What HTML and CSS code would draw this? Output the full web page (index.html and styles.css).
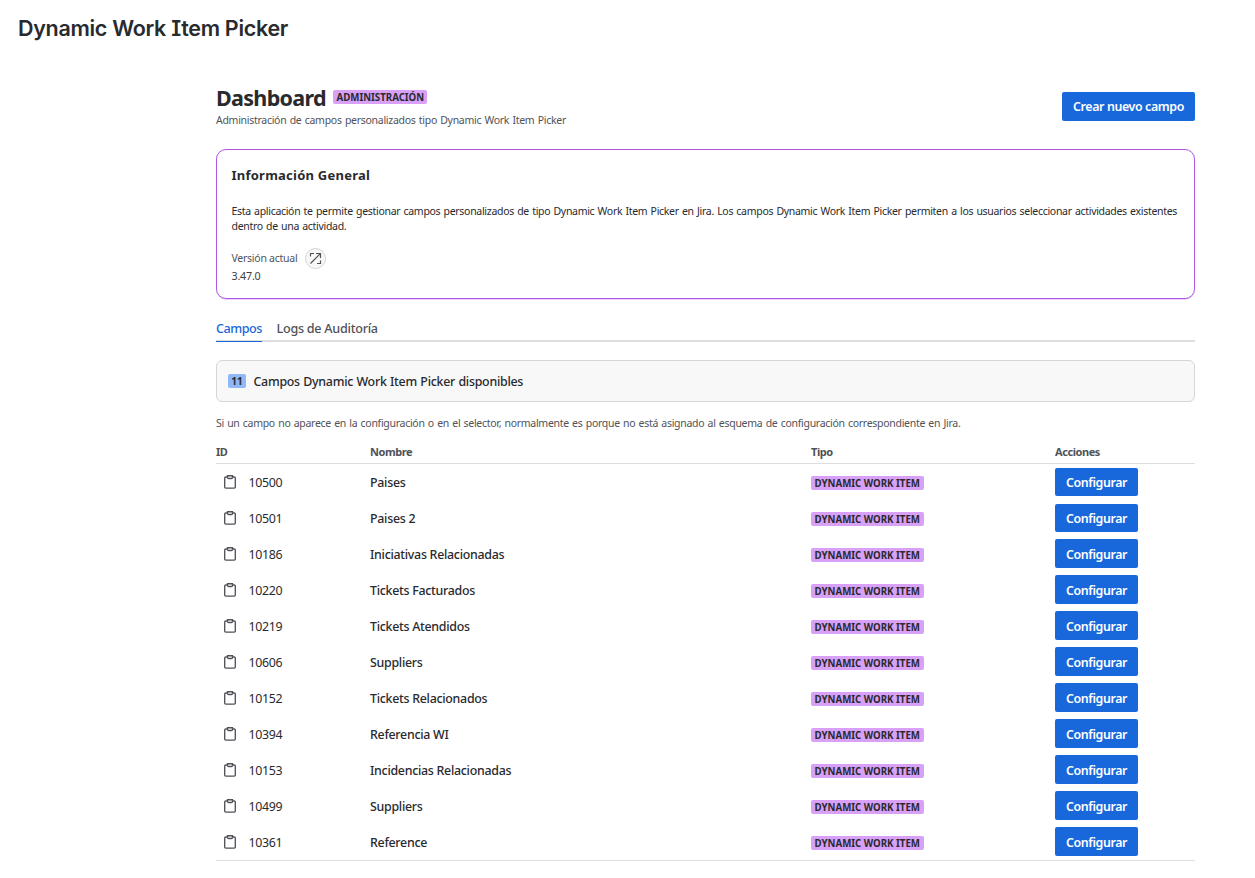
FILE: index.html
```html
<!DOCTYPE html>
<html lang="es">
<head>
<meta charset="utf-8">
<title>Dynamic Work Item Picker</title>
<link rel="stylesheet" href="styles.css">
</head>
<body>
<svg class="sprite" aria-hidden="true"><symbol id="clipboard" viewBox="0 0 14 16"><path d="M4.5 3H2.8Q1.7 3 1.7 4.1V13Q1.7 14.1 2.8 14.1H11.2Q12.3 14.1 12.3 13V4.1Q12.3 3 11.2 3H9.5M4.5 1.7H9.5V3.2Q9.5 4.5 8.4 4.5H5.6Q4.5 4.5 4.5 3.2Z" fill="none" stroke="#505258" stroke-width="1.35"/></symbol></svg>
<h1 class="page-title">Dynamic Work Item Picker</h1>
<main class="content">
  <header class="head">
    <div class="head-text">
      <div class="head-line"><h2 class="dash">Dashboard</h2><span class="lozenge admin">ADMINISTRACIÓN</span></div>
      <p class="subtitle">Administración de campos personalizados tipo Dynamic Work Item Picker</p>
    </div>
    <button class="btn create">Crear nuevo campo</button>
  </header>
  <section class="info">
    <h3 class="info-title">Información General</h3>
    <p class="info-text">Esta aplicación te permite gestionar campos personalizados de tipo Dynamic Work Item Picker en Jira. Los campos Dynamic Work Item Picker permiten a los usuarios seleccionar actividades existentes<br>dentro de una actividad.</p>
    <div class="version"><span class="version-label">Versión actual</span><span class="round"><svg width="13" height="13" viewBox="0 0 13 13"><path d="M1.5 4.5V1.5H5M7 1.5H11.5V6M11.5 8.5V11.5H8M1.5 11.5L11.3 1.7" fill="none" stroke="#505258" stroke-width="1.2"/></svg></span></div>
    <div class="version-number">3.47.0</div>
  </section>
  <nav class="tabs"><span class="tab active">Campos</span><span class="tab logs">Logs de Auditoría</span></nav>
  <div class="counter"><span class="count">11</span><span class="counter-text">Campos Dynamic Work Item Picker disponibles</span></div>
  <p class="note">Si un campo no aparece en la configuración o en el selector, normalmente es porque no está asignado al esquema de configuración correspondiente en Jira.</p>
  <div class="table">
    <div class="row thead"><span>ID</span><span>Nombre</span><span>Tipo</span><span>Acciones</span></div>
    <div class="row"><span class="id"><svg class="clip"><use href="#clipboard"/></svg>10500</span><span class="name">Paises</span><span class="lozenge">DYNAMIC WORK ITEM</span><button class="btn">Configurar</button></div>
    <div class="row"><span class="id"><svg class="clip"><use href="#clipboard"/></svg>10501</span><span class="name">Paises 2</span><span class="lozenge">DYNAMIC WORK ITEM</span><button class="btn">Configurar</button></div>
    <div class="row"><span class="id"><svg class="clip"><use href="#clipboard"/></svg>10186</span><span class="name">Iniciativas Relacionadas</span><span class="lozenge">DYNAMIC WORK ITEM</span><button class="btn">Configurar</button></div>
    <div class="row"><span class="id"><svg class="clip"><use href="#clipboard"/></svg>10220</span><span class="name">Tickets Facturados</span><span class="lozenge">DYNAMIC WORK ITEM</span><button class="btn">Configurar</button></div>
    <div class="row"><span class="id"><svg class="clip"><use href="#clipboard"/></svg>10219</span><span class="name">Tickets Atendidos</span><span class="lozenge">DYNAMIC WORK ITEM</span><button class="btn">Configurar</button></div>
    <div class="row"><span class="id"><svg class="clip"><use href="#clipboard"/></svg>10606</span><span class="name">Suppliers</span><span class="lozenge">DYNAMIC WORK ITEM</span><button class="btn">Configurar</button></div>
    <div class="row"><span class="id"><svg class="clip"><use href="#clipboard"/></svg>10152</span><span class="name">Tickets Relacionados</span><span class="lozenge">DYNAMIC WORK ITEM</span><button class="btn">Configurar</button></div>
    <div class="row"><span class="id"><svg class="clip"><use href="#clipboard"/></svg>10394</span><span class="name">Referencia WI</span><span class="lozenge">DYNAMIC WORK ITEM</span><button class="btn">Configurar</button></div>
    <div class="row"><span class="id"><svg class="clip"><use href="#clipboard"/></svg>10153</span><span class="name">Incidencias Relacionadas</span><span class="lozenge">DYNAMIC WORK ITEM</span><button class="btn">Configurar</button></div>
    <div class="row"><span class="id"><svg class="clip"><use href="#clipboard"/></svg>10499</span><span class="name">Suppliers</span><span class="lozenge">DYNAMIC WORK ITEM</span><button class="btn">Configurar</button></div>
    <div class="row"><span class="id"><svg class="clip"><use href="#clipboard"/></svg>10361</span><span class="name">Reference</span><span class="lozenge">DYNAMIC WORK ITEM</span><button class="btn">Configurar</button></div>
  </div>
</main>
</body>
</html>
```
FILE: styles.css
```css
* { box-sizing: border-box; }
body {
  margin: 0;
  padding: 16px 60px 0 18px;
  background: #fff;
  color: #292a2e;
  font: 400 11px/15px "Noto Sans", sans-serif;
  white-space: nowrap;
}
h1, h2, h3, p { margin: 0; }
.sprite { display: none; }
.page-title {
  font: 600 21.5px/24px Inter, sans-serif;
  font-feature-settings: "cv08";
  letter-spacing: -0.3px;
}
.content { margin: 47px 0 0 198px; width: 979px; }
.head { display: flex; justify-content: space-between; height: 62px; }
.head-line { display: flex; align-items: flex-start; gap: 7px; height: 26px; }
.dash { width: 110px; font-size: 21.5px; line-height: 21px; font-weight: 700; letter-spacing: -0.68px; }
.lozenge {
  width: 113px;
  height: 14px;
  padding-left: 3.5px;
  border-radius: 2px;
  background: #d8a0f7;
  font-size: 9.7px;
  line-height: 16px;
  font-weight: 700;
  letter-spacing: 0;
}
.admin { width: 94px; margin-top: 3px; }
.subtitle { font-size: 10.5px; letter-spacing: -0.28px; word-spacing: 0.8px; color: #505258; }
.btn {
  width: 83px;
  height: 28px;
  padding: 1px 0 0;
  border: 0;
  border-radius: 2px;
  background: #1868db;
  color: #fff;
  font: 600 12.4px/27px "Noto Sans", sans-serif;
  letter-spacing: -0.38px;
}
.create { width: 133px; height: 29px; margin-top: 5px; padding: 0 0 1px; }
.info {
  height: 150px;
  padding: 16px 14px 0 14.5px;
  border: 1px solid #af59e1;
  border-radius: 10px;
  box-shadow: 0 0.5px 0 #d8a0f7;
}
.info-title { font-size: 13px; line-height: 18px; font-weight: 700; letter-spacing: 0.24px; }
.info-text { margin-top: 20px; font-size: 10.5px; letter-spacing: -0.3px; word-spacing: 0.8px; }
.version { display: flex; align-items: center; gap: 8px; height: 22px; margin-top: 13px; }
.version-label { width: 65.5px; font-size: 10.5px; letter-spacing: -0.26px; color: #505258; }
.round {
  display: grid;
  place-items: center;
  width: 21px;
  height: 21px;
  border: 1px solid #d4d4d6;
  border-radius: 50%;
  background: #f8f8f8;
}
.version-number { font-size: 10.7px; letter-spacing: -0.2px; color: #3b3d42; }
.tabs {
  display: flex;
  gap: 14.5px;
  height: 24px;
  margin-top: 19px;
  border-bottom: 2px solid #dddee1;
  font-size: 12.6px;
  line-height: 21px;
  font-weight: 500;
  color: #505258;
}
.tab.active { width: 46px; height: 24px; border-bottom: 1px solid #1868db; color: #1868db; letter-spacing: -0.46px; }
.logs { letter-spacing: -0.26px; }
.counter {
  display: flex;
  align-items: center;
  gap: 7.5px;
  height: 42px;
  margin-top: 18px;
  padding-left: 11px;
  border: 1px solid #d5d6d9;
  border-radius: 6px;
  background: #f8f8f8;
}
.count { width: 18px; height: 14px; border-radius: 2px; background: #8fb8f6; font-size: 10px; line-height: 14px; font-weight: 700; text-align: center; }
.counter-text { font-size: 12.4px; font-weight: 500; letter-spacing: -0.27px; word-spacing: 0.5px; }
.note { margin-top: 14px; font-size: 10.5px; letter-spacing: -0.285px; word-spacing: 0.8px; color: #505258; }
.table { margin-top: 9px; border-bottom: 1px solid #dddee1; }
.row { display: grid; grid-template-columns: 154px 441px 244px 1fr; align-items: center; height: 36px; }
.row .lozenge { margin: 1px 0 0 0; }
.row .btn { margin-top: -1px; }
.row:nth-child(n+4) .btn { height: 29px; margin-top: -2px; padding-top: 2px; line-height: 27px; }
.thead { height: 24px; border-bottom: 1px solid #dddee1; font-weight: 700; letter-spacing: -0.44px; color: #505258; }
.id { display: flex; align-items: center; gap: 11.5px; padding-left: 7px; font-size: 12.4px; letter-spacing: -0.35px; }
.clip { width: 14px; height: 16px; }
.name { font-size: 12.4px; font-weight: 500; letter-spacing: -0.28px; }
```
